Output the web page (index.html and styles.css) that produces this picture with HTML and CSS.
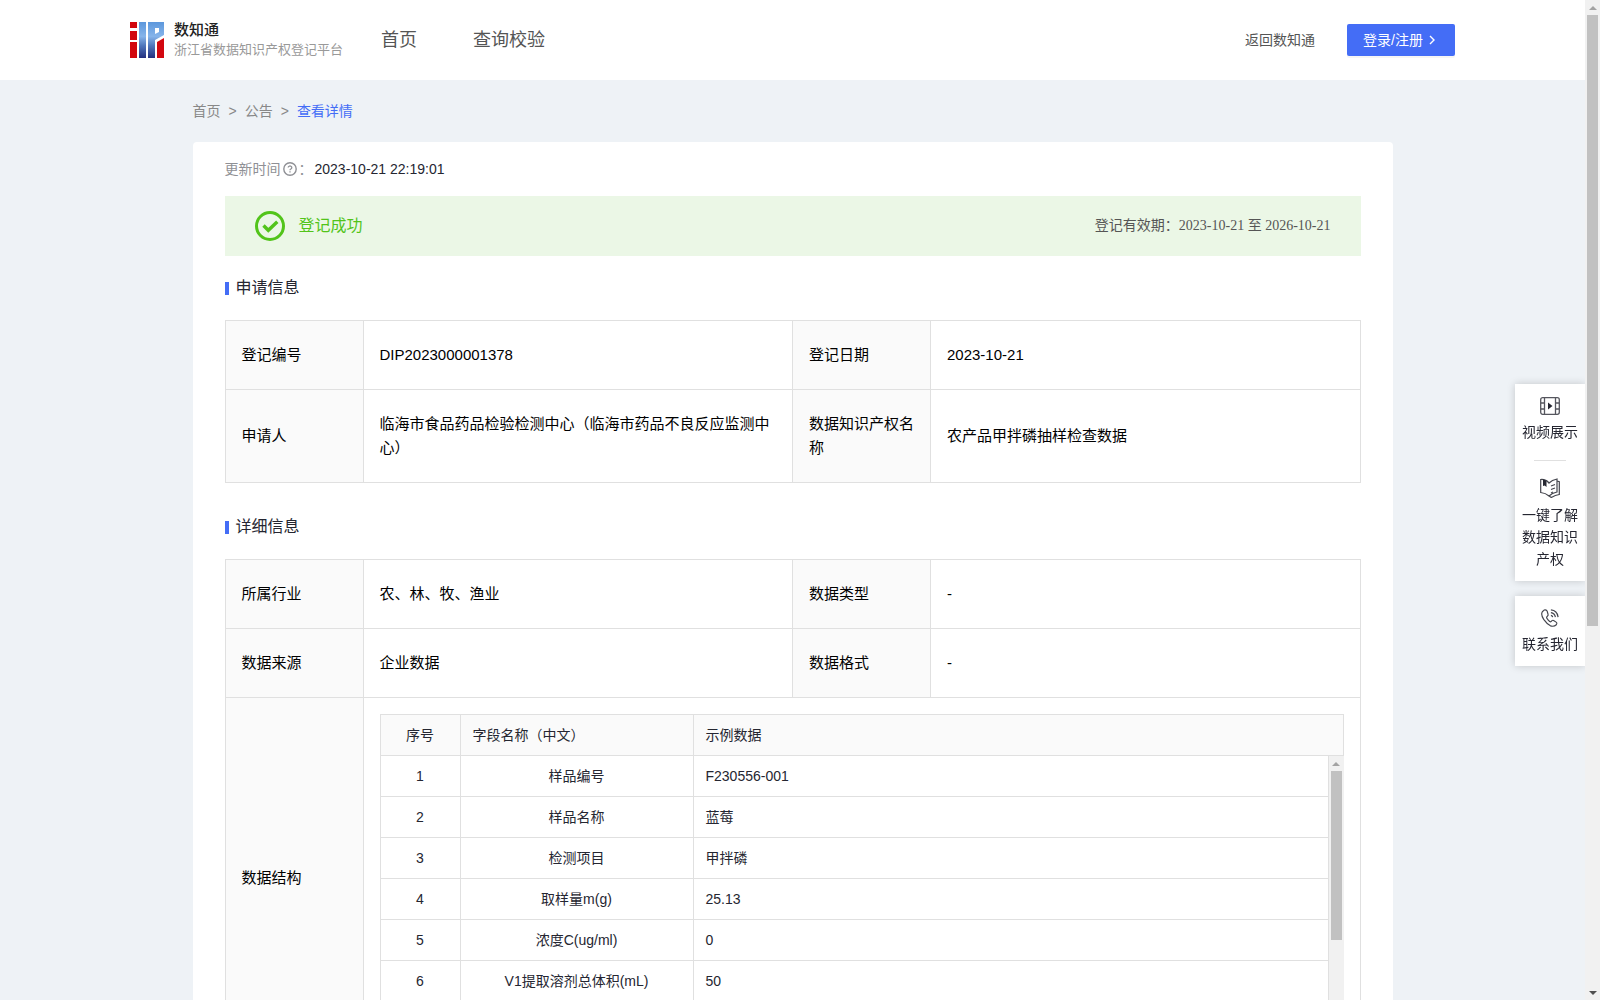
FILE: index.html
```html
<!DOCTYPE html>
<html lang="zh-CN">
<head>
    <meta charset="UTF-8">
    <meta name="viewport" content="width=device-width, initial-scale=1.0">
    <title>数知通</title>
    <link rel="stylesheet" href="styles.css">
</head>
<body>
    <header class="header">
        <a class="logo" href="#">
            <svg class="logoIcon" viewBox="0 0 34 36" width="34" height="36" aria-hidden="true">
                <defs>
                    <linearGradient id="blue" x1="0" y1="0" x2="0" y2="1">
                        <stop offset="0" stop-color="#5c97dc"/>
                        <stop offset="0.4" stop-color="#86b4ea"/>
                        <stop offset="0.65" stop-color="#5078bd"/>
                        <stop offset="1" stop-color="#24307f"/>
                    </linearGradient>
                </defs>
                <path fill="#d2070f" d="M0 0h7v6H0zM0 9h7v9H0zM0 20h7v16H0zM27 20l7-4v20h-7z"/>
                <path fill="url(#blue)" fill-rule="evenodd" d="M9 0h7v36H9zM18 0h16v13l-9 5v18h-7zM25 6v6l4-2V6z"/>
            </svg>
            <span class="logoText">
                <strong>数知通</strong>
                <span>浙江省数据知识产权登记平台</span>
            </span>
        </a>
        <nav class="nav">
            <a href="#">首页</a>
            <a href="#">查询校验</a>
        </nav>
        <a class="back" href="#">返回数知通</a>
        <button class="login" type="button">登录/注册
            <svg viewBox="0 0 10 10" width="10" height="10" aria-hidden="true"><path d="M3 1l4 4-4 4" fill="none" stroke="#fff" stroke-width="1.4"/></svg>
        </button>
    </header>

    <main class="main">
        <nav class="crumb">
            <a href="#">首页</a><span>&gt;</span><a href="#">公告</a><span>&gt;</span><a class="current" href="#">查看详情</a>
        </nav>
        <div class="card">
            <div class="updateTime">
                <span>更新时间</span>
                <svg viewBox="0 0 14 14" width="14" height="14" aria-hidden="true">
                    <circle cx="7" cy="7" r="6.2" fill="none" stroke="#8f9095" stroke-width="1.4"/>
                    <path d="M5.2 5.6a1.8 1.6 0 1 1 2.7 1.4q-.9.5-.9 1.3M7 9.3v1.3" fill="none" stroke="#8f9095" stroke-width="1.3"/>
                </svg>
                <span>：</span>
                <time>2023-10-21 22:19:01</time>
            </div>
            <div class="status">
                <svg viewBox="0 0 30 30" width="30" height="30" aria-hidden="true">
                    <circle cx="15" cy="15" r="13.5" fill="none" stroke="#52c41a" stroke-width="3"/>
                    <path d="M8.500 14.500l4.800 4.800 9-8.600" fill="none" stroke="#52c41a" stroke-width="3.400"/>
                </svg>
                <span class="statusText">登记成功</span>
                <span class="period">登记有效期：2023-10-21 至 2026-10-21</span>
            </div>

            <h2 class="title">申请信息</h2>
            <table class="info">
                <colgroup><col class="labelCol"><col><col class="labelCol"><col></colgroup>
                <tr>
                    <th scope="row">登记编号</th><td>DIP2023000001378</td>
                    <th scope="row">登记日期</th><td>2023-10-21</td>
                </tr>
                <tr>
                    <th scope="row">申请人</th><td>临海市食品药品检验检测中心（临海市药品不良反应监测中心）</td>
                    <th scope="row">数据知识产权名称</th><td>农产品甲拌磷抽样检查数据</td>
                </tr>
            </table>

            <h2 class="title">详细信息</h2>
            <table class="info">
                <colgroup><col class="labelCol"><col><col class="labelCol"><col></colgroup>
                <tr>
                    <th scope="row">所属行业</th><td>农、林、牧、渔业</td>
                    <th scope="row">数据类型</th><td>-</td>
                </tr>
                <tr>
                    <th scope="row">数据来源</th><td>企业数据</td>
                    <th scope="row">数据格式</th><td>-</td>
                </tr>
                <tr>
                    <th scope="row">数据结构</th>
                    <td class="structure" colspan="3">
                        <table class="fields">
                            <colgroup><col class="numCol"><col class="nameCol"><col></colgroup>
                            <thead>
                                <tr><th>序号</th><th>字段名称（中文）</th><th>示例数据</th></tr>
                            </thead>
                        </table>
                        <div class="fieldBody">
                            <table class="fields">
                                <colgroup><col class="numCol"><col class="nameCol"><col></colgroup>
                                <tbody>
                                    <tr><td>1</td><td>样品编号</td><td>F230556-001</td></tr>
                                    <tr><td>2</td><td>样品名称</td><td>蓝莓</td></tr>
                                    <tr><td>3</td><td>检测项目</td><td>甲拌磷</td></tr>
                                    <tr><td>4</td><td>取样量m(g)</td><td>25.13</td></tr>
                                    <tr><td>5</td><td>浓度C(ug/ml)</td><td>0</td></tr>
                                    <tr><td>6</td><td>V1提取溶剂总体积(mL)</td><td>50</td></tr>
                                </tbody>
                            </table>
                            <div class="scrollbar" aria-hidden="true">
                                <span class="arrow up"></span>
                                <div class="track"><div class="thumb fieldThumb"></div></div>
                                <span class="arrow down"></span>
                            </div>
                        </div>
                    </td>
                </tr>
            </table>
        </div>
    </main>

    <aside class="side">
        <div class="sideBox">
            <a href="#">
                <svg viewBox="0 0 20 18" width="20" height="18" fill="none" stroke="#55565e" stroke-width="1.3" aria-hidden="true">
                    <rect x="0.7" y="0.7" width="18.6" height="16.6" rx="2"/>
                    <path d="M4.500 1v16M15.500 1v16M1 6h3.500M1 12h3.500M15.500 6H19M15.500 12H19"/>
                    <path d="M8 5.500l4.500 3.500L8 12.500z" fill="#252631" stroke="none"/>
                </svg>
                视频展示
            </a>
            <a href="#">
                <svg viewBox="0 0 20 20" width="20" height="20" fill="none" stroke="#44454d" stroke-width="1.2" aria-hidden="true">
                    <path d="M.7 1.500q5-.5 8.300 3.500 3-3 8-4v13q-5 1-8 4-3.300-3-8.300-3.500zM17 3l2.300.6v12.900q-4 .5-8 3l-2.300-1.500"/>
                    <path d="M3 1.500l3.500 1V9L4.700 7.500 3 8z" fill="#252631" stroke="none"/>
                    <path d="M11 8l4-1.500M11 11.500l4-1.500M11 15l2-1"/>
                </svg>
                一键了解数据知识产权
            </a>
        </div>
        <div class="sideBox">
            <a href="#">
                <svg viewBox="0 0 20 20" width="18" height="18" fill="none" stroke="#44454d" stroke-width="1.3" aria-hidden="true">
                    <path d="M3.500 1.200L1.500 3Q-.5 6 3 11.500q3.500 5 7.500 7.200 4 1.300 6.500-1.200l.5-1.200q.3-1-.7-1.700l-2.800-1.900q-1-.5-1.800.3l-1 1q-.8.500-1.600-.2-2-1.600-3.100-3.600-.5-.9.200-1.700l.9-1q.6-.8.200-1.700L6.800 2.200q-1.500-2-3.300-1z"/>
                    <path d="M11 1q7 .5 8 8M11 4q4.300.5 5 5M11 7q1.800.3 2 2"/>
                </svg>
                联系我们
            </a>
        </div>
    </aside>

    <div class="scrollbar pageScroll" aria-hidden="true">
        <span class="arrow up"></span>
        <div class="track"><div class="thumb pageThumb"></div></div>
        <span class="arrow down"></span>
    </div>
</body>
</html>
```
FILE: styles.css
```css
*{
    margin: 0;
    padding: 0;
    box-sizing: border-box;
}
body{
    padding-right: 15px;
    font: 14px/22px "Liberation Sans", "Noto Sans CJK SC", sans-serif;
    color: #252631;
    background-color: #eef2f6;
}
a{
    text-decoration: none;
    color: inherit;
}
svg{
    flex: none;
}
.header{
    display: flex;
    align-items: center;
    height: 80px;
    padding: 0 130px;
    background-color: #fff;
}
.logo{
    display: flex;
    align-items: center;
    gap: 10px;
    margin-right: 38px;
}
.logoText{
    display: flex;
    flex-direction: column;
    font-size: 13px;
    line-height: 20px;
    color: #999;
}
.logoText strong{
    font-size: 15px;
    font-weight: 500;
    color: #222;
}
.nav{
    display: flex;
    gap: 56px;
    font-size: 18px;
    color: #555;
}
.back{
    margin-left: auto;
    margin-right: 32px;
    color: #555;
}
.login{
    display: flex;
    align-items: center;
    gap: 4px;
    height: 32px;
    padding: 0 18px 0 16px;
    border: none;
    border-radius: 2px;
    font: inherit;
    color: #fff;
    background-color: #446df6;
    box-shadow: 0 2px 0 rgba(0,0,0,0.04);
}
.main{
    max-width: 1200px;
    margin: 0 auto;
    padding-bottom: 300px;
}
.crumb{
    display: flex;
    gap: 8px;
    padding: 20px 0;
    color: #888;
}
.crumb .current{
    color: #446df6;
}
.card{
    padding: 16px 32px 32px;
    border-radius: 4px;
    background-color: #fff;
}
.updateTime{
    display: flex;
    align-items: center;
    gap: 2px;
    color: #8f9095;
}
.updateTime time{
    color: #252631;
}
.status{
    display: flex;
    align-items: center;
    height: 60px;
    margin-top: 16px;
    padding: 0 30px;
    background-color: #ebf7e6;
}
.statusText{
    margin-left: 14px;
    font-size: 16px;
    color: #52c41a;
}
.period{
    margin-left: auto;
    font-family: "Liberation Serif", "Noto Sans CJK SC", serif;
    color: #555;
}
.title{
    display: flex;
    align-items: center;
    gap: 7px;
    height: 24px;
    margin: 20px 0;
    font-size: 16px;
    font-weight: 400;
}
.title::before{
    content: "";
    width: 4px;
    height: 13px;
    background-color: #446df6;
}
.info{
    width: 100%;
    table-layout: fixed;
    border-collapse: collapse;
    font-size: 15px;
    line-height: 24px;
    color: #000;
}
.info + .title{
    margin-top: 32px;
}
.labelCol{
    width: 138px;
}
.info th,
.info td{
    padding: 22px 16px;
    border: 1px solid #e0e0e0;
    font-weight: 400;
    text-align: left;
}
.info th{
    background-color: #fafafa;
}
.info .structure{
    padding: 16px;
}
.fieldBody{
    display: flex;
    align-items: flex-start;
    height: 286px;
}
.fields{
    flex: 1;
    width: 100%;
    table-layout: fixed;
    border-collapse: collapse;
    font-size: 14px;
    line-height: 22px;
    color: #252631;
}
.numCol{
    width: 80px;
}
.nameCol{
    width: 233px;
}
.info .fields th,
.info .fields td{
    padding: 9px 12px;
}
.info .fieldBody td{
    border-top: none;
}
.info .fields tr > :first-child,
.info .fields td:nth-child(2){
    text-align: center;
}

/* 滚动条 */
.scrollbar{
    display: flex;
    flex-direction: column;
    align-items: center;
    flex: none;
    width: 15px;
    height: 100%;
    background-color: #f1f1f1;
}
.pageScroll{
    position: fixed;
    top: 0;
    right: 0;
}
.track{
    flex: 1;
    width: 11px;
}
.thumb{
    background-color: #c1c1c1;
}
.fieldThumb{
    height: 66%;
}
.pageThumb{
    height: 63%;
}
.arrow{
    display: flex;
    align-items: center;
    height: 15px;
}
.arrow::before{
    content: "";
    border: 4px solid transparent;
}
.up::before{
    border-top: none;
    border-bottom-color: #a3a3a3;
}
.down::before{
    border-bottom: none;
    border-top-color: #505050;
}

.side{
    position: fixed;
    top: 384px;
    right: 15px;
    display: flex;
    flex-direction: column;
    gap: 15px;
    width: 70px;
}
.sideBox{
    background-color: #fff;
    box-shadow: 0 0 8px rgba(0,0,0,0.18);
}
.sideBox a{
    display: flex;
    flex-direction: column;
    align-items: center;
    gap: 6px;
    padding: 13px 7px 11px;
    text-align: center;
}
.sideBox a + a{
    padding-top: 6px;
}
.sideBox a + a::before{
    content: "";
    width: 32px;
    height: 1px;
    margin-bottom: 11px;
    background-color: #e0e0e0;
}
```
